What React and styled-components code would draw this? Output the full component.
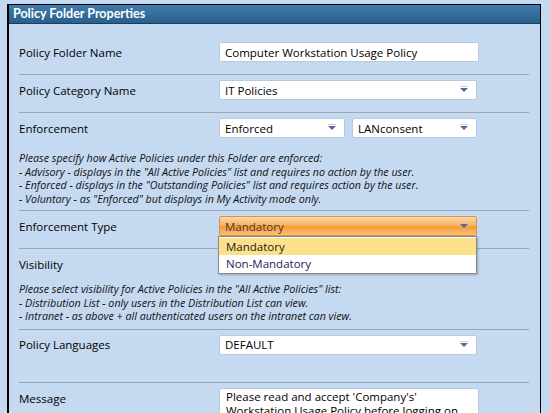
import React from "react";
import styled, { createGlobalStyle } from "styled-components";

const Global = createGlobalStyle`
  html, body { margin: 0; padding: 0; background: #c5d9f1; overflow: hidden; }
  body { font-family: "Open Sans", "Noto Sans", sans-serif; color: #000; }
`;

const Panel = styled.div`
  margin: 4px 0 0 7px;
  width: 531px;
  height: 408px;
  overflow: hidden;
  border: 1px solid #000;
  border-left-width: 2px;
  border-bottom: none;
  background: #c5d9f1;
`;

const TitleBar = styled.div`
  height: 18px;
  line-height: 18px;
  padding-left: 4px;
  color: #fff;
  font-family: Lato, "Open Sans", sans-serif;
  font-weight: bold;
  font-size: 12.5px;
  background: linear-gradient(#3f7cab, #2a5f8c);
  border-bottom: 1px solid #1d3f5e;
`;

const Body = styled.div`
  padding: 13px 11px 0 10px;
`;

const Row = styled.div`
  padding: 5px 0 ${(p) => p.$bottom || 12}px;
  border-bottom: ${(p) => (p.$last ? "none" : "1px solid #9aa6b4")};
  position: relative;
`;

const Line = styled.div`
  display: flex;
  align-items: center;
  height: 20px;
`;

const Label = styled.div`
  width: 200px;
  font-size: 11.5px;
  flex-shrink: 0;
  padding-top: ${(p) => p.$top || 0}px;
`;

const Field = styled.div`
  width: ${(p) => p.$w}px;
  height: 20px;
  box-sizing: border-box;
  margin-right: ${(p) => p.$gap || 0}px;
  background: #fff;
  border: 1px solid #b7c9df;
  border-radius: 2px;
  display: flex;
  align-items: center;
  padding: 0 6px 0 5px;
  font-size: 11.5px;
  position: relative;
`;

const Value = styled.span`
  flex: 1;
  white-space: nowrap;
  overflow: hidden;
`;

const OrangeField = styled(Field)`
  background: linear-gradient(#fcd9a4 0%, #f9b264 45%, #f79a36 55%, #fbc27a 100%);
  border-color: #d59450;
  color: #4a3a2a;
`;

const Arrow = styled.span`
  width: 0;
  height: 0;
  border-left: 4px solid transparent;
  border-right: 4px solid transparent;
  border-top: 4px solid #5a6794;
  margin-right: 2px;
  position: relative;
  &::before {
    content: "";
    position: absolute;
    left: -4px;
    top: -6px;
    width: 8px;
    height: 1px;
    background: #c8d0e0;
  }
`;

const Help = styled.div`
  margin-top: ${(p) => p.$top}px;
  font-style: italic;
  font-size: 10.7px;
  line-height: 13.5px;
  color: #111;
`;

const Menu = styled.div`
  position: absolute;
  left: 199px;
  top: 25px;
  width: 257px;
  background: #fff;
  border: 1px solid #8a8a8a;
  box-shadow: 1px 1px 2px rgba(0, 0, 0, 0.25);
  z-index: 10;
  padding: 1px 0;
`;

const MenuItem = styled.div`
  height: 17px;
  line-height: 17px;
  padding-left: 7px;
  font-size: 11.5px;
  color: ${(p) => (p.$active ? "#1a1a1a" : "#1d1b5a")};
  background: ${(p) => (p.$active ? "#fde18a" : "transparent")};
`;

const TextArea = styled.div`
  width: 260px;
  height: 40px;
  box-sizing: border-box;
  background: #fff;
  border: 1px solid #b7c9df;
  border-radius: 2px;
  padding: 1px 6px;
  font-size: 11.5px;
  line-height: 14px;
`;

const Top = styled.div`
  display: flex;
  align-items: flex-start;
`;

const Select = ({ w, gap, children }) => (
  <Field $w={w} $gap={gap}>
    <Value>{children}</Value>
    <Arrow />
  </Field>
);

export default function App() {
  return (
    <>
      <Global />
      <Panel>
        <TitleBar>Policy Folder Properties</TitleBar>
        <Body>
          <Row>
            <Line>
              <Label>Policy Folder Name</Label>
              <Field $w={260}>
                <Value>Computer Workstation Usage Policy</Value>
              </Field>
            </Line>
          </Row>
          <Row>
            <Line>
              <Label>Policy Category Name</Label>
              <Select w={258}>IT Policies</Select>
            </Line>
          </Row>
          <Row $bottom={4}>
            <Line>
              <Label>Enforcement</Label>
              <Select w={126} gap={7}>Enforced</Select>
              <Select w={125}>LANconsent</Select>
            </Line>
            <Help $top={14}>
              Please specify how Active Policies under this Folder are enforced:
              <br />- Advisory - displays in the "All Active Policies" list and requires no action by the user.
              <br />- Enforced - displays in the "Outstanding Policies" list and requires action by the user.
              <br />- Voluntary - as "Enforced" but displays in My Activity mode only.
            </Help>
          </Row>
          <Row>
            <Line>
              <Label>Enforcement Type</Label>
              <OrangeField $w={258}>
                <Value>Mandatory</Value>
                <Arrow />
              </OrangeField>
            </Line>
            <Menu>
              <MenuItem $active>Mandatory</MenuItem>
              <MenuItem>Non-Mandatory</MenuItem>
            </Menu>
          </Row>
          <Row $bottom={5}>
            <Line>
              <Label>Visibility</Label>
              <Select w={258}>Intranet</Select>
            </Line>
            <Help $top={9}>
              Please select visibility for Active Policies in the "All Active Policies" list:
              <br />- Distribution List - only users in the Distribution List can view.
              <br />- Intranet - as above + all authenticated users on the intranet can view.
            </Help>
          </Row>
          <Row $bottom={27}>
            <Line>
              <Label>Policy Languages</Label>
              <Select w={258}>DEFAULT</Select>
            </Line>
          </Row>
          <Row $last>
            <Top>
              <Label $top={3}>Message</Label>
              <TextArea>
                Please read and accept 'Company's' Workstation Usage Policy before logging on
              </TextArea>
            </Top>
          </Row>
        </Body>
      </Panel>
    </>
  );
}
